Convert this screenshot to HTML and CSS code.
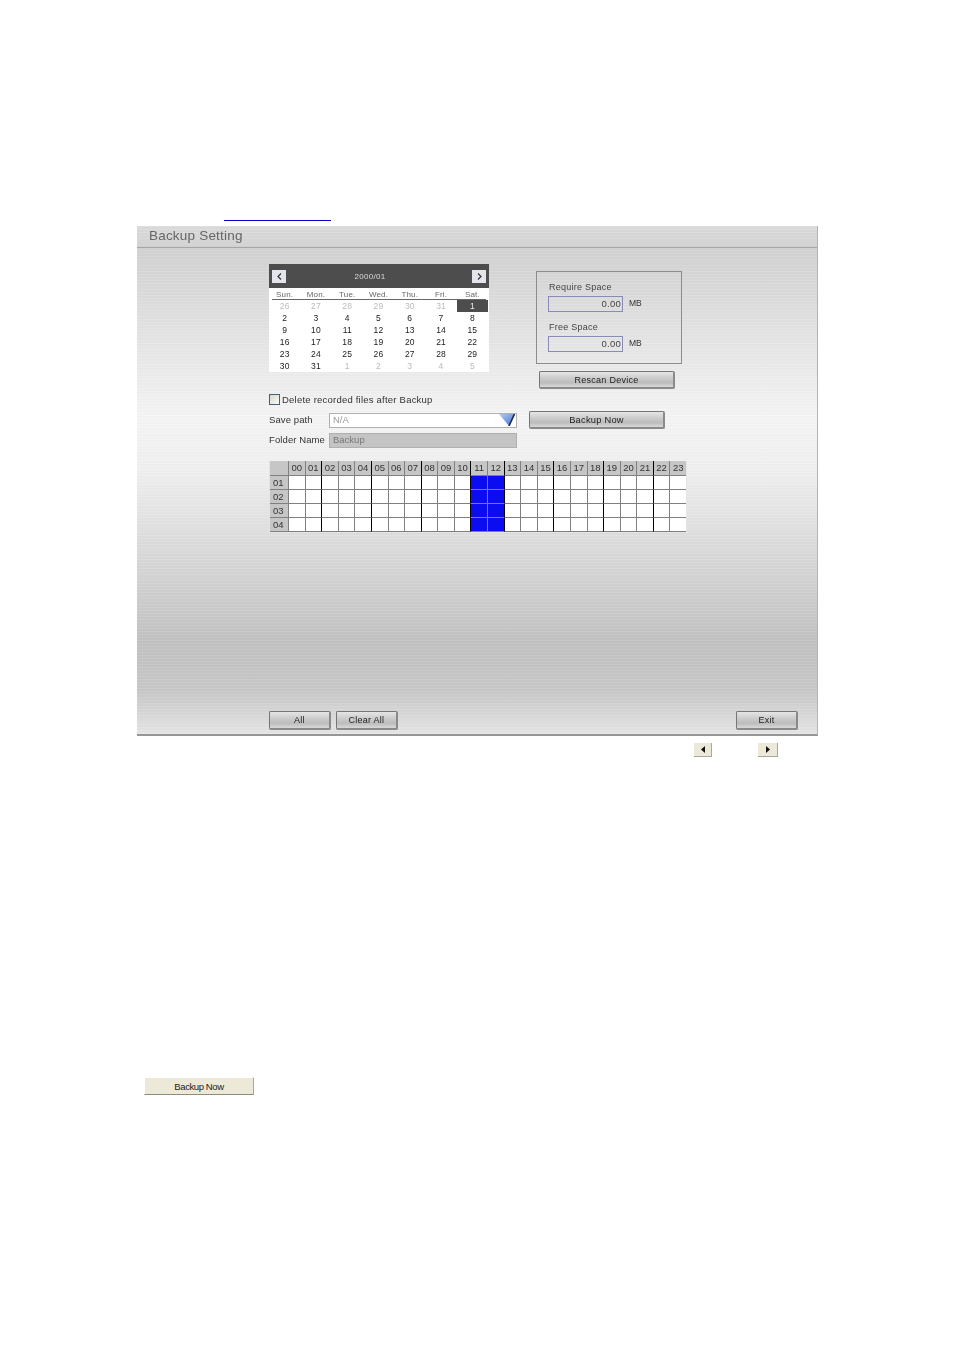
FILE: index.html
```html
<!DOCTYPE html>
<html lang="en">
<head>
<meta charset="utf-8">
<title>Backup Setting</title>
<link rel="stylesheet" href="styles.css">
</head>
<body>
<div class="link-rule"></div>
<main class="panel">
  <h1 class="panel-title">Backup Setting</h1>
  <div class="panel-body">
    <div class="top-row">
      <section class="calendar">
        <div class="cal-head">
          <span class="cal-nav"><svg width="5" height="7" viewBox="0 0 5 7"><path d="M4 .5 1 3.5l3 3" fill="none" stroke="#333" stroke-width="1.2"/></svg></span>
          <span class="cal-title">2000/01</span>
          <span class="cal-nav"><svg width="5" height="7" viewBox="0 0 5 7"><path d="M1 .5l3 3-3 3" fill="none" stroke="#333" stroke-width="1.2"/></svg></span>
        </div>
        <div class="cal-days">
          <span>Sun.</span><span>Mon.</span><span>Tue.</span><span>Wed.</span><span>Thu.</span><span>Fri.</span><span>Sat.</span>
        </div>
        <div class="cal-dates">
          <span class="off">26</span><span class="off">27</span><span class="off">28</span><span class="off">29</span><span class="off">30</span><span class="off">31</span><span class="today">1</span>
          <span>2</span><span>3</span><span>4</span><span>5</span><span>6</span><span>7</span><span>8</span>
          <span>9</span><span>10</span><span>11</span><span>12</span><span>13</span><span>14</span><span>15</span>
          <span>16</span><span>17</span><span>18</span><span>19</span><span>20</span><span>21</span><span>22</span>
          <span>23</span><span>24</span><span>25</span><span>26</span><span>27</span><span>28</span><span>29</span>
          <span>30</span><span>31</span><span class="off">1</span><span class="off">2</span><span class="off">3</span><span class="off">4</span><span class="off">5</span>
        </div>
      </section>
      <div class="space-col">
        <section class="space-box">
          <div class="space-label">Require Space</div>
          <div class="space-line"><span class="space-value">0.00</span><span class="space-unit">MB</span></div>
          <div class="space-label space-label-2">Free Space</div>
          <div class="space-line"><span class="space-value">0.00</span><span class="space-unit">MB</span></div>
        </section>
        <button class="btn btn-rescan">Rescan Device</button>
      </div>
    </div>

    <label class="check-row"><span class="checkbox"></span>Delete recorded files after Backup</label>

    <div class="path-row">
      <div class="fields">
        <div class="field"><span class="field-label">Save path</span><span class="field-box field-select">N/A<svg class="select-arrow" width="16" height="12" viewBox="0 0 16 12"><defs><linearGradient id="arrowFill" x1="0" y1="0" x2="1" y2="1"><stop offset="0" stop-color="#b5cdf5"/><stop offset="1" stop-color="#3f6fd0"/></linearGradient></defs><path d="M0 0h16L10 12z" fill="url(#arrowFill)"/><path d="M15.5 0 10 12" stroke="#1c2c50" stroke-width="1.6"/></svg></span></div>
        <div class="field"><span class="field-label">Folder Name</span><span class="field-box field-disabled">Backup</span></div>
      </div>
      <button class="btn btn-backup">Backup Now</button>
    </div>

    <div class="schedule">
      <span class="corner"></span><span class="hh">00</span><span class="hh">01</span><span class="hh k">02</span><span class="hh">03</span><span class="hh">04</span><span class="hh k">05</span><span class="hh">06</span><span class="hh">07</span><span class="hh k">08</span><span class="hh">09</span><span class="hh">10</span><span class="hh k">11</span><span class="hh">12</span><span class="hh k">13</span><span class="hh">14</span><span class="hh">15</span><span class="hh k">16</span><span class="hh">17</span><span class="hh">18</span><span class="hh k">19</span><span class="hh">20</span><span class="hh">21</span><span class="hh k">22</span><span class="hh">23</span>
      <span class="rh">01</span><i></i><i></i><i class="k"></i><i></i><i></i><i class="k"></i><i></i><i></i><i class="k"></i><i></i><i></i><i class="k on"></i><i class="on"></i><i class="k"></i><i></i><i></i><i class="k"></i><i></i><i></i><i class="k"></i><i></i><i></i><i class="k"></i><i></i>
      <span class="rh">02</span><i></i><i></i><i class="k"></i><i></i><i></i><i class="k"></i><i></i><i></i><i class="k"></i><i></i><i></i><i class="k on"></i><i class="on"></i><i class="k"></i><i></i><i></i><i class="k"></i><i></i><i></i><i class="k"></i><i></i><i></i><i class="k"></i><i></i>
      <span class="rh">03</span><i></i><i></i><i class="k"></i><i></i><i></i><i class="k"></i><i></i><i></i><i class="k"></i><i></i><i></i><i class="k on"></i><i class="on"></i><i class="k"></i><i></i><i></i><i class="k"></i><i></i><i></i><i class="k"></i><i></i><i></i><i class="k"></i><i></i>
      <span class="rh">04</span><i></i><i></i><i class="k"></i><i></i><i></i><i class="k"></i><i></i><i></i><i class="k"></i><i></i><i></i><i class="k on"></i><i class="on"></i><i class="k"></i><i></i><i></i><i class="k"></i><i></i><i></i><i class="k"></i><i></i><i></i><i class="k"></i><i></i>
    </div>

    <div class="footer">
      <button class="btn btn-small">All</button>
      <button class="btn btn-small">Clear All</button>
      <button class="btn btn-small btn-exit">Exit</button>
    </div>
  </div>
</main>
<div class="inline-icons">
  <span class="mini-btn"><svg width="4" height="7" viewBox="0 0 4 7"><path d="M4 0v7L0 3.5z" fill="#111"/></svg></span>
  <span class="mini-btn mini-btn-next"><svg width="4" height="7" viewBox="0 0 4 7"><path d="M0 0v7l4-3.5z" fill="#111"/></svg></span>
</div>
<button class="xp-btn">Backup Now</button>
</body>
</html>
```
FILE: styles.css
```css
* { box-sizing: border-box; }

body {
  margin: 0;
  height: 1350px;
  background: #fff;
  font-family: "Liberation Sans", Arial, sans-serif;
  color: #333;
  overflow: hidden;
}

.link-rule {
  width: 107px;
  height: 1px;
  margin: 220px 0 0 224px;
  background: #0000c8;
}

.panel {
  display: flex;
  flex-direction: column;
  width: 681px;
  height: 510px;
  margin: 5px 0 0 137px;
  border-bottom: 2px solid #969696;
  border-right: 1px solid #b4b4b4;
  background:
    repeating-linear-gradient(180deg, rgba(255,255,255,.07) 0 1px, rgba(0,0,0,.012) 1px 3px),
    linear-gradient(180deg, #dcdcdc 0, #d2d2d2 24px, #dcdcdc 70px, #f5f5f5 190px, #f0f0f0 245px, #d8d8d8 335px, #c2c2c2 415px, #c8c8c8 465px, #e6e6e6 508px);
  filter: blur(.25px);
}

.panel-title {
  height: 22px;
  margin: 0;
  padding: 1px 0 0 12px;
  border-bottom: 1px solid #a6a6a6;
  font-size: 13.5px;
  line-height: 17px;
  font-weight: 400;
  letter-spacing: .2px;
  color: #666;
}

.panel-body {
  flex: 1;
  display: flex;
  flex-direction: column;
  padding: 16px 0 4px 132px;
}

.top-row { display: flex; height: 125px; }

.calendar { width: 220px; height: 108px; background: #fff; }

.cal-head {
  display: flex;
  align-items: center;
  justify-content: space-between;
  height: 24px;
  padding: 0 3px;
  background: #4d4d4d;
}

.cal-nav {
  display: flex;
  align-items: center;
  justify-content: center;
  width: 14px;
  height: 13px;
  background: #e4e4ec;
}

.cal-title {
  margin-right: 18px;
  font-size: 8px;
  letter-spacing: .3px;
  color: #ddd;
}

.cal-days,
.cal-dates {
  display: grid;
  grid-template-columns: repeat(7, 1fr);
  padding-right: 1px;
  text-align: center;
  font-size: 8.5px;
  letter-spacing: .15px;
}

.cal-days {
  height: 12px;
  padding-top: 2px;
  background: linear-gradient(#666, #666) center bottom / 214px 1px no-repeat;
  line-height: 10px;
  font-size: 8px;
  color: #666;
}

.cal-dates {
  grid-auto-rows: 12px;
  line-height: 13px;
  color: #222;
}

.cal-dates .off { color: #bbb; }
.cal-dates .today { background: #4d4d4d; color: #eee; }

.space-col { margin: 7px 0 0 47px; }

.space-box {
  width: 146px;
  height: 93px;
  padding: 10px 0 0 11px;
  border: 1px solid #8c8c8c;
}

.space-label {
  padding-left: 1px;
  font-size: 9px;
  line-height: 10px;
  letter-spacing: .25px;
  color: #444;
}

.space-label-2 { margin-top: 10px; }

.space-line {
  display: flex;
  align-items: center;
  margin-top: 4px;
}

.space-value {
  width: 75px;
  height: 16px;
  padding-right: 1px;
  border: 1px solid #8a8ab8;
  font-size: 9.5px;
  line-height: 13px;
  letter-spacing: .25px;
  text-align: right;
  color: #444;
}

.space-unit { margin: -2px 0 0 6px; font-size: 8.5px; color: #333; }

.btn {
  display: block;
  padding: 0;
  border: 1px solid #777;
  border-right: 2px solid #8a8a8a;
  border-bottom: 2px solid #8a8a8a;
  border-radius: 2px;
  background: linear-gradient(180deg, #e6e6e6 0, #cfcfcf 35%, #bcbcbc 70%, #d8d8d8 100%);
  font-family: inherit;
  font-size: 9px;
  letter-spacing: .25px;
  color: #222;
}

.btn-rescan { width: 136px; height: 18px; margin: 7px 0 0 3px; }

.check-row {
  display: flex;
  align-items: center;
  height: 12px;
  margin-top: 4px;
  font-size: 9.5px;
  letter-spacing: .22px;
  color: #333;
}

.checkbox {
  width: 11px;
  height: 11px;
  margin-right: 2px;
  border: 1px solid #46607c;
  background: linear-gradient(135deg, #d8d8d0, #fbfbf8);
}

.path-row { display: flex; margin-top: 6px; }

.fields { display: flex; flex-direction: column; gap: 5px; padding-top: 2px; }

.field { display: flex; align-items: center; height: 15px; }

.field-label {
  width: 60px;
  margin-top: -2px;
  font-size: 9.5px;
  letter-spacing: .1px;
  color: #333;
}

.field-box {
  position: relative;
  width: 188px;
  height: 15px;
  padding-left: 3px;
  border: 1px solid #b0b0b0;
  font-size: 9.5px;
  line-height: 11px;
  color: #999;
}

.field-select { background: #fff; }
.field-disabled { background: #c4c4c4; color: #777; }

.select-arrow { position: absolute; top: 0; right: 1px; }

.btn-backup { width: 136px; height: 18px; margin-left: 12px; font-size: 9.3px; }

.schedule {
  display: grid;
  grid-template-columns: 18px repeat(24, 1fr);
  grid-template-rows: 15px repeat(4, 14px);
  width: 418px;
  height: 72px;
  margin-top: 13px;
  border: 1px solid #e4e4e4;
  border-width: 0 1px 1px 1px;
  background: #fff;
  font-size: 9.5px;
  text-align: center;
  color: #333;
}

.corner, .hh, .rh {
  background: #c6c6c6;
  line-height: 14px;
  border-bottom: 1px solid #808080;
}

.hh { border-left: 1px solid #808080; }
.rh { text-align: left; padding-left: 3px; }

.schedule i {
  border-left: 1px solid #808080;
  border-bottom: 1px solid #808080;
}

.schedule .k { border-left-color: #000; }
.schedule .on { background: #0c0cf0; }

.footer {
  display: flex;
  gap: 5px;
  margin-top: auto;
}

.btn-small { width: 62px; height: 19px; }
.btn-exit { margin-left: 333px; }

.inline-icons {
  display: flex;
  height: 15px;
  margin: 7px 0 0 694px;
}

.mini-btn {
  display: flex;
  align-items: center;
  justify-content: center;
  width: 18px;
  height: 14px;
  border-right: 1px solid #aca899;
  border-bottom: 1px solid #aca899;
  background: #ece9d8;
}

.mini-btn-next { margin-left: 46px; width: 20px; }

.xp-btn {
  display: block;
  width: 110px;
  height: 18px;
  margin: 319px 0 0 144px;
  padding: 0;
  border: 1px solid;
  border-color: #fff #aca899 #8f8c7c #fff;
  background: #ece9d8;
  font-family: inherit;
  font-size: 9.5px;
  letter-spacing: -.4px;
  color: #222;
}
```
